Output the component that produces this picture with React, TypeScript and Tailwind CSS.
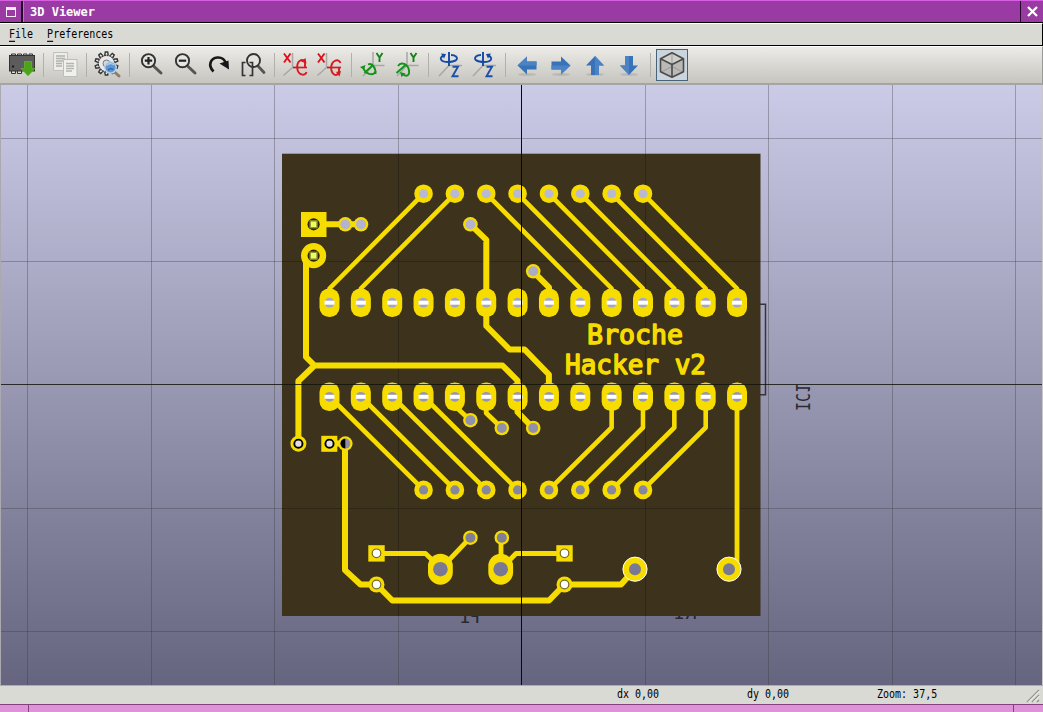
import type { ReactNode } from "react";

const COPPER = "#f7dc00";
const BOARD = "#3d321b";
const PITCH = 31.35;
const col = (i: number) => 329.5 + i * PITCH;

function Tool({ children, active = false }: { children: ReactNode; active?: boolean }) {
  return (
    <button className="flex h-[34px] w-[34px] shrink-0 items-center justify-center">
      <span
        className={
          active
            ? "flex h-8 w-8 items-center justify-center border border-[#48637c] bg-[#cbd5dd]"
            : "flex h-8 w-8 items-center justify-center"
        }
      >
        <svg width="26" height="26" viewBox="0 0 26 26" fill="none" className="shrink-0 overflow-visible">
          {children}
        </svg>
      </span>
    </button>
  );
}

function Separator() {
  return (
    <span className="flex h-6 w-[9px] shrink-0 justify-center">
      <span className="h-full w-px bg-[#b1b0aa]" />
    </span>
  );
}

function Chip() {
  return (
    <>
      <path d="M2.500 4V2h4v2M8.500 4V2h4v2M14.500 4V2h3.500v2M20 4V2h3.500v2M2.500 19v2.500h4V19M8.500 19v2.500h4V19" stroke="#333" fill="#ddd" />
      <rect x="0.500" y="3.500" width="25" height="15.500" fill="#5c5c5c" stroke="#333" />
      <circle cx="4" cy="14.500" r="1.200" fill="#222" />
      <path d="M15.500 9.500h7v7h3.500l-7 7.500-7-7.500h3.500z" fill="#4ba417" stroke="#6cbd35" strokeWidth="0.600" />
    </>
  );
}

function CopyPages() {
  return (
    <>
      <path d="M1.500 0.500h14v18h-14z" fill="#ecece9" stroke="#c0c0bc" />
      <path d="M4 4h9M4 6.500h9M4 9h9M4 11.500h6M4 14h6" stroke="#b1b1ae" strokeWidth="1.400" />
      <path d="M11.500 7.500h13.500v17h-13.500z" fill="#f0f0ed" stroke="#bdbdb9" />
      <path d="M14 11.500h8M14 14h8M14 16.500h8M14 19h6" stroke="#b4b4b1" strokeWidth="1.400" />
    </>
  );
}

function GearSearch() {
  return (
    <>
      <g transform="translate(11.500 11.500)">
        {[0, 36, 72, 108, 144, 180, 216, 252, 288, 324].map((a) => (
          <path key={a} d="M-1.700-8.500-1.200-11.500h2.400l.5 3" transform={`rotate(${a})`} fill="#eee" stroke="#343434" strokeWidth="1.400" />
        ))}
        <circle r="8.300" fill="#e9e9e9" stroke="#3c3c3c" strokeWidth="1.400" strokeDasharray="2 .6" />
        <circle r="3.500" fill="#d9d9d8" stroke="#777" />
      </g>
      <path d="m19.500 20 4.500 4" stroke="#8a7d6d" strokeWidth="3" strokeLinecap="round" />
      <circle cx="15.500" cy="15.500" r="5.700" fill="#5d96d4" stroke="#b9d6ef" strokeWidth="1.300" />
      <path d="M11.500 13.500c2.500-2.500 5-2.500 7.500-.5" stroke="#a9cced" strokeWidth="1.500" />
      <path d="m13 18 2.500-1.500 3 1" stroke="#3568ab" strokeWidth="1.500" />
    </>
  );
}

function Magnifier({ minus = false }: { minus?: boolean }) {
  return (
    <>
      <path d="m15.500 14 7.500 7" stroke="#555" strokeWidth="3" strokeLinecap="round" />
      <circle cx="10.500" cy="8.700" r="6.600" fill="#e5e5e1" stroke="#333" strokeWidth="1.900" />
      <path d={minus ? "M6.800 8.700h7.400" : "M6.800 8.700h7.400M10.500 5v7.400"} stroke="#222" strokeWidth="2.200" />
    </>
  );
}

function Redo() {
  return (
    <>
      <path d="M7.500 19.500C1.500 13.500 4.500 6 11.500 5.500c4.500-.3 7.500 2.500 8.300 6" stroke="#171717" strokeWidth="2.700" />
      <path d="m13.500 11.500 9-3 .5 9z" fill="#171717" />
    </>
  );
}

function FitZoom() {
  return (
    <>
      <path d="m18 14 6 6.500" stroke="#555" strokeWidth="2.800" strokeLinecap="round" />
      <circle cx="13.500" cy="8.500" r="6.500" fill="#e3e3df" stroke="#333" strokeWidth="1.900" />
      <path d="M5.500 10.500h-3v13h3M9.500 10.500h3v13h-3" stroke="#333" strokeWidth="1.700" />
    </>
  );
}

function RotateX({ reverse = false }: { reverse?: boolean }) {
  return (
    <>
      <path d="M9.500 1v14.500H16M9.500 15.500l-9 8" stroke="#a7a7a5" strokeWidth="1.500" />
      <path d="m1 1.500 6.500 9M7.500 1.500l-6.500 9" stroke="#e0101a" strokeWidth="1.900" />
      <path d="M10 15.500h14" stroke="#d91820" strokeWidth="1.700" />
      <path
        d={reverse ? "M23.500 11c-1.500-5-9-3-9.300 4.500C14 22 19 25 22 21V16" : "M23.500 20c-1.500 5-9 3-9.300-4.500C14 9 19 6 22 10v6"}
        stroke="#d91820" strokeWidth="1.900"
      />
      <path d={reverse ? "m19 20 5-1-1.500 5.500z" : "m18 9.500 4.500-3.500 1 5.500z"} fill="#d91820" />
    </>
  );
}

function RotateY({ reverse = false }: { reverse?: boolean }) {
  return (
    <>
      <path d="M13 0v13.500h11.500M13 13.500 3 24" stroke="#a7a7a5" strokeWidth="1.500" />
      <path d="m16.500 1 3 4.500L22.500 1M19.500 5.500V10" stroke="#17801b" strokeWidth="1.900" />
      <path
        d={reverse ? "M4 14c3-5 10-2 11 4.500.8 5-2 6.500-6 4M11.500 13 2.500 21" : "M16 19c-3 6-11 3-13-4M8 12.500c4-2 8 3 7.500 9.500M13 13 4.500 21"}
        stroke="#159219" strokeWidth="1.900"
      />
      <path d={reverse ? "m6 20 1.500 5 4-3.500z" : "m0 15 5.500-2L4 18z"} fill="#159219" />
    </>
  );
}

function RotateZ({ reverse = false }: { reverse?: boolean }) {
  return (
    <>
      <path d="M12 0v13.500h13M12 13.500 2 24" stroke="#a7a7a5" strokeWidth="1.500" />
      <path d="M15.500 14.700H21l-5.500 9.600h6" stroke="#1b50aa" strokeWidth="1.900" />
      <g transform={reverse ? "matrix(-1 0 0 1 24 0)" : undefined}>
        <path d="M7 3.500C1 6 4 10 11 10s11-2.500 8-5.500c-1-1-3-1.500-5-1.500M12 0v14" stroke="#164ba5" strokeWidth="1.900" />
        <path d="m4 1.500 5 .5-2 4.500z" fill="#164ba5" />
      </g>
    </>
  );
}

function Arrow({ angle }: { angle: number }) {
  return (
    <>
      <ellipse cx="13" cy="22.500" rx="9" ry="1.500" fill="#77776f" opacity=".25" />
      <g transform={`rotate(${angle} 13 13.500)`}>
        <path d="M3.500 13.500 13 4.500v5h9.500v8H13v5z" fill="#3872b8" />
        <path d="M13 4.500v5h9.500v4h-19z" fill="#4b83c5" />
      </g>
    </>
  );
}

function Cube() {
  return (
    <>
      <path d="m13 0.700 11.500 6v13L13 25.300 1.500 19.700v-13z" fill="#b9b9b7" />
      <path d="m13 0.700 11.500 6L13 12.500 1.500 6.700z" fill="#cfcfcc" />
      <path d="M13 1v13.500M13 14.500 2 20M13 14.500 24 20" stroke="#999" />
      <path d="m13 0.700 11.500 6v13L13 25.300 1.500 19.700v-13zM1.500 6.700 13 12.500l11.500-5.800M13 12.500v12.800" stroke="#4d4b48" strokeWidth="1.600" strokeLinejoin="round" />
    </>
  );
}

function Via({ x, y, r = 7.3, hole = 5 }: { x: number; y: number; r?: number; hole?: number }) {
  return (
    <>
      <circle cx={x} cy={y} r={r} fill={COPPER} />
      <circle cx={x} cy={y} r={hole} fill="url(#sky)" />
    </>
  );
}

function HeaderPad({ x, y }: { x: number; y: number }) {
  return (
    <>
      <rect x={x - 10} y={y - 14.3} width="20" height="28.600" rx="9.500" fill={COPPER} />
      <circle cx={x} cy={y} r="4.900" fill="url(#sky)" />
      <rect x={x - 5} y={y - 2} width="10" height="4" fill="#fff" />
    </>
  );
}

function BoardView() {
  const thin = [
    ...[0, 1].map((i) => `M${col(i + 3)} 193.700L${col(i)} 288.500V302`),
    ...[5, 6, 7, 8, 9, 10].map((i) => `M${col(i)} 193.700L${col(i + 3)} 288.500V302`),
    ...[0, 1, 2, 3].map((i) => `M${col(i)} 396.500L${col(i + 3)} 489.800`),
    ...[9, 10, 11, 12].map((i) => `M${col(i)} 397V427.500L${col(i - 2)} 489.800`),
  ];
  const thinPath = thin.join("");
  const columns = Array.from({ length: 14 }, (_, i) => i);
  return (
    <svg width="1043" height="600" viewBox="0 85 1043 600" className="block" fill="none">
      <defs>
        <linearGradient id="sky" gradientUnits="userSpaceOnUse" x1="0" y1="85" x2="0" y2="685">
          <stop stopColor="#cccbe7" />
          <stop offset="1" stopColor="#66657f" />
        </linearGradient>
      </defs>
      <rect y="85" width="1043" height="600" fill="url(#sky)" />
      <g stroke="#34343f" strokeOpacity=".34" shapeRendering="crispEdges">
        <path d="M27.500 85v600M151.500 85v600M274.500 85v600M398.500 85v600M645.500 85v600M768.500 85v600M892.500 85v600M1015.500 85v600" />
        <path d="M0 138.500h1043M0 261.500h1043M0 508.500h1043M0 631.500h1043" />
      </g>
      <path d="M760 304.300h5.500v90.500H760" stroke="#34343f" strokeWidth="1.500" />
      <g fill="#292932" className="font-['DejaVu_Sans_Mono',monospace]" fontSize="19">
        <text transform="translate(795.500 411) rotate(90) scale(-1 1)" textLength="27" lengthAdjust="spacingAndGlyphs">IC1</text>
        <text transform="translate(480 622.500) scale(-1 1)" textLength="20">P1</text>
        <text transform="translate(697 618.500) scale(-1 1)" textLength="23">R1</text>
      </g>
      <rect x="282" y="153.700" width="478.500" height="462.300" fill={BOARD} />
      <path d="M398.500 154v462M645.500 154v462M282 261.500h478M282 508.500h478" stroke="#000" strokeOpacity=".22" shapeRendering="crispEdges" />

      <g stroke={COPPER} strokeLinejoin="round" strokeLinecap="round">
        <path d={thinPath} strokeWidth="4.600" />
        <path d="M454.900 397v9l15.400 14.200M486.200 397v16l15.600 15M376.500 553.500h49l15 14.500M440.500 569l29.800-31.300M501 537.700V569l15-15.500h48.500M737 397v165" strokeWidth="4.800" />
        <path
          d="M313.500 224.300H361M470.300 224.300l16 15.500V326l23.300 23.500h15l24.300 25V397M533 271.300l16 16V302M306 256v101l8.500 8.500H502.500l15 15V412l15.500 16M314.500 365.500 298.400 381v62.600M329.500 443.600H345v126.500l15.500 14.400h16l15.800 16H549l15.500-16H621l14-15.500"
          strokeWidth="6"
        />
      </g>

      {[3, 4, 5, 6, 7, 8, 9, 10].map((i) => (
        <g key={i}>
          <Via x={col(i)} y={193.700} r={9.300} hole={4.600} />
          <Via x={col(i)} y={489.900} r={9.300} hole={4.600} />
        </g>
      ))}
      {columns.map((i) => (
        <g key={i}>
          <HeaderPad x={col(i)} y={302.700} />
          <HeaderPad x={col(i)} y={396.800} />
        </g>
      ))}
      {[[345.300, 224.300], [361, 224.300], [470.400, 224.300], [533.200, 271.300], [470.400, 420.200], [501.800, 428], [533.200, 428], [470.400, 537.700], [501.800, 537.700], [345.300, 443.600]].map(([x, y]) => (
        <Via key={`${x}-${y}`} x={x} y={y} />
      ))}
      <path d="M345.300 438.800a4.800 4.800 0 0 0 0 9.600z" fill="#000" />

      <rect x="301" y="212" width="25.500" height="25" fill={COPPER} />
      <circle cx="313.600" cy="255.700" r="12.600" fill={COPPER} />
      {[224.300, 255.700].map((y) => (
        <g key={y}>
          <circle cx="313.600" cy={y} r="6.100" fill="#2a260c" />
          <rect x="310.200" y={y - 3.400} width="6.800" height="6.800" fill="#efff5d" stroke="#8d9430" strokeWidth="1.400" />
        </g>
      ))}

      <circle cx="298.400" cy="443.700" r="8" fill={COPPER} />
      <rect x="321.300" y="435.800" width="16" height="16" fill={COPPER} />
      {[298.400, 329.500].map((x) => (
        <circle key={x} cx={x} cy="443.700" r="4.100" fill="#dedede" stroke="#000" strokeWidth="1.900" />
      ))}

      {[376.500, 564.500].map((x) => (
        <g key={x}>
          <rect x={x - 8.200} y="545.200" width="16.400" height="16.400" fill={COPPER} />
          <circle cx={x} cy="584.500" r="8" fill={COPPER} />
          <circle cx={x} cy="553.300" r="4.300" fill="#fff" stroke="#716b2c" strokeWidth="1.200" />
          <circle cx={x} cy="584.500" r="4.300" fill="#fff" stroke="#716b2c" strokeWidth="1.200" />
        </g>
      ))}

      {[440.400, 500.700].map((x) => (
        <g key={x}>
          <rect x={x - 12.400} y="553.700" width="24.800" height="31" rx="12.400" fill={COPPER} />
          <circle cx={x} cy="569.200" r="7.300" fill="url(#sky)" />
        </g>
      ))}
      {[635, 729].map((x) => (
        <g key={x}>
          <circle cx={x} cy="569.200" r="12.100" fill={COPPER} stroke="#fff" strokeWidth="1" />
          <circle cx={x} cy="569.200" r="6" fill="url(#sky)" />
        </g>
      ))}

      <g fill={COPPER} stroke={COPPER} strokeWidth="1.500" strokeLinejoin="round" fontSize="27" className="font-['DejaVu_Sans_Mono',monospace]">
        <text x="587" y="344" textLength="96" lengthAdjust="spacingAndGlyphs">Broche</text>
        <text x="565" y="374" textLength="141" lengthAdjust="spacingAndGlyphs">Hacker v2</text>
      </g>

      <path d="M521.500 85v600" stroke="#080a06" shapeRendering="crispEdges" />
      <path d="M0 384.500h1043" stroke="#10120a" strokeOpacity=".82" shapeRendering="crispEdges" />
      <path d="M.5 85v600" stroke="#aaa9b1" shapeRendering="crispEdges" />
      <path d="M1042.500 85v600" stroke="#c8c8ca" shapeRendering="crispEdges" />
    </svg>
  );
}

export default function App() {
  return (
    <div className="flex h-[712px] w-[1043px] flex-col overflow-hidden bg-[#dadad4] font-['DejaVu_Sans_Mono',monospace] text-[10px] text-black">
      <header className="flex h-[23px] shrink-0 border-t border-b border-t-[#d75fe4] border-b-black bg-[#993ba3] text-white">
        <button className="flex h-full w-[23px] items-center justify-center border-r-2 border-r-[#24052a]">
          <span className="h-[10px] w-[10px] border border-t-[3px] border-[#faeafa]" />
        </button>
        <div className="flex flex-1 items-center border-l border-[#d75fe4] pl-[6px] text-[12px] leading-none font-bold">
          3D Viewer
        </div>
        <button className="flex h-full w-[23px] items-center justify-center border-l border-l-[#24052a]">
          <svg width="11" height="11" viewBox="0 0 11 11" className="ml-px">
            <path d="m1 1 9 9m0-9-9 9" stroke="#fff" strokeWidth="2.300" />
          </svg>
        </button>
      </header>

      <nav className="flex h-[23px] shrink-0 items-center gap-[14px] border-t border-r border-b border-t-white border-r-black border-b-black pl-[9px] leading-none">
        {["File", "Preferences"].map((name) => (
          <span key={name} className="flex h-3 items-center">
            <span className="inline-block origin-center scale-y-[1.15]">
              <span className="underline underline-offset-2">{name[0]}</span>
              {name.slice(1)}
            </span>
          </span>
        ))}
      </nav>

      <div className="flex h-[39px] shrink-0 items-center border-t border-r border-b-2 border-t-white border-r-[#999] border-b-[#a5a5a2] bg-linear-to-b from-[#ecebe7] to-[#c6c5bf] pl-[5px]">
        <Tool><Chip /></Tool>
        <Separator />
        <Tool><CopyPages /></Tool>
        <Separator />
        <Tool><GearSearch /></Tool>
        <Separator />
        <Tool><Magnifier /></Tool>
        <Tool><Magnifier minus /></Tool>
        <Tool><Redo /></Tool>
        <Tool><FitZoom /></Tool>
        <Separator />
        <Tool><RotateX /></Tool>
        <Tool><RotateX reverse /></Tool>
        <Separator />
        <Tool><RotateY /></Tool>
        <Tool><RotateY reverse /></Tool>
        <Separator />
        <Tool><RotateZ /></Tool>
        <Tool><RotateZ reverse /></Tool>
        <Separator />
        <Tool><Arrow angle={0} /></Tool>
        <Tool><Arrow angle={180} /></Tool>
        <Tool><Arrow angle={90} /></Tool>
        <Tool><Arrow angle={270} /></Tool>
        <Separator />
        <Tool active><Cube /></Tool>
      </div>

      <main className="h-[600px] shrink-0">
        <BoardView />
      </main>

      <footer className="flex h-[19px] shrink-0 items-center border-t border-[#adada9] pl-[617px] leading-none">
        <span className="w-[130px] scale-y-[1.15]">dx 0,00</span>
        <span className="w-[130px] scale-y-[1.15]">dy 0,00</span>
        <span className="w-[148px] scale-y-[1.15]">Zoom: 37,5</span>
        <svg width="16" height="16" viewBox="0 0 16 16" className="shrink-0">
          <path d="m2 15 12-12M7 15l7-7M12 15l2-2" stroke="#96968c" strokeWidth="1.400" />
          <path d="m3.500 15 11-11M8.500 15l6-6" stroke="#fff" strokeWidth=".8" />
        </svg>
      </footer>
      <div className="flex h-2 shrink-0 border-t border-[#85417e] bg-[#df91d9]">
        <span className="w-[29px] border-r border-[#85417e]" />
        <span className="flex-1" />
        <span className="w-[30px] border-l border-[#85417e]" />
      </div>
    </div>
  );
}
